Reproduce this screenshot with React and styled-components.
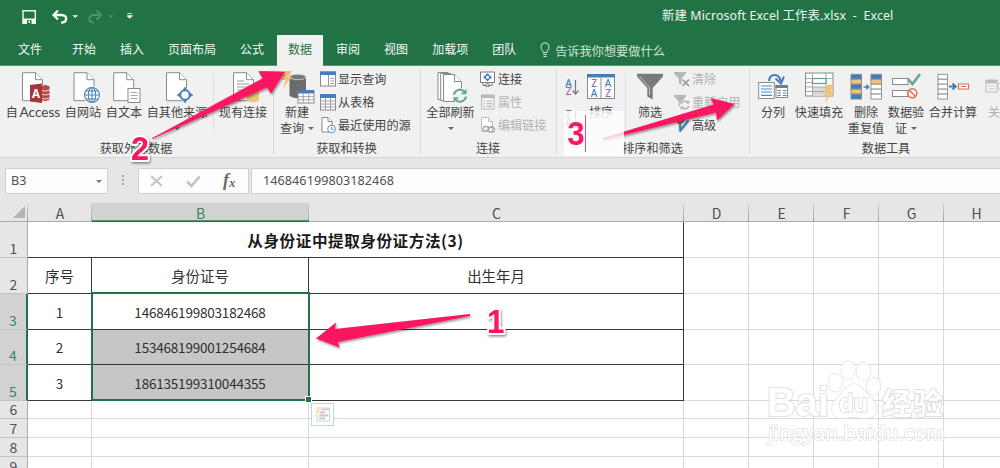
import React from "react";
import styled, { createGlobalStyle } from "styled-components";

const cjk = `"Noto Sans CJK SC", "Noto Sans", sans-serif`;
const latin = `"Noto Sans", "Noto Sans CJK SC", sans-serif`;

const Global = createGlobalStyle`
  * { box-sizing: border-box; }
  body { margin: 0; background: #fff; font-family: ${cjk}; overflow: hidden; }
  svg { display: block; overflow: visible; flex: none; }
`;

const Window = styled.div`
  position: relative;
  width: 1000px;
  height: 468px;
  overflow: hidden;
  display: flex;
  flex-direction: column;
  background: #fff;
`;

const TitleBar = styled.header`
  height: 35px;
  flex: none;
  background: #217346;
  display: flex;
  align-items: flex-start;
`;

const QuickAccess = styled.div`
  width: 662px;
  height: 35px;
  padding-left: 22px;
`;

const WindowTitle = styled.div`
  padding-top: 6px;
  font: 12.4px/20px ${latin};
  letter-spacing: ${(p) => p.$track || 0}px;
  color: #eef6f1;
  white-space: pre;
`;

const TabBar = styled.nav`
  height: 31px;
  flex: none;
  background: #217346;
  border-bottom: 1px solid #4f9a72;
  display: flex;
  padding-left: 6px;
`;

const Tab = styled.div`
  height: ${(p) => (p.$active ? 31 : 30)}px;
  padding: 0 ${(p) => (p.$active ? 11 : 12)}px;
  margin: 0 ${(p) => (p.$active ? 1 : 0)}px;
  margin-right: ${(p) => p.$gap || (p.$active ? 1 : 0)}px;
  font-size: 12px;
  line-height: 28px;
  white-space: nowrap;
  color: ${(p) => (p.$active ? "#217346" : "#f4faf6")};
  background: ${(p) => (p.$active ? "#f1f1f1" : "transparent")};
`;

const TellMe = styled.div`
  display: flex;
  gap: 5px;
  margin-left: 12px;
  padding-top: 7px;
  font-size: 12.2px;
  line-height: 18px;
  color: #cfe3d7;
`;

const Ribbon = styled.div`
  height: 91px;
  flex: none;
  display: flex;
  background: #f1f1f1;
`;

const Group = styled.section`
  width: ${(p) => p.$w}px;
  flex: none;
  display: flex;
  flex-direction: column;
  position: relative;
  background: linear-gradient(#d9d9d9, #d9d9d9) right 3px / 1px 85px no-repeat;
  background-position: right 0 top 3px;
`;

const GroupBody = styled.div`
  height: 72px;
  display: flex;
  padding-left: ${(p) => p.$pad || 0}px;
`;

const GroupName = styled.div`
  width: 100%;
  text-align: center;
  font-size: 12.1px;
  line-height: 19px;
  color: #444;
  margin-left: -1px;
`;

const BigButton = styled.div`
  width: ${(p) => p.$w}px;
  flex: none;
  display: flex;
  flex-direction: column;
  align-items: center;
  padding-top: 6px;
`;

const Label = styled.span`
  font-size: 12.1px;
  line-height: 16px;
  height: 16px;
  white-space: nowrap;
  color: ${(p) => (p.$off ? "#b1b1b1" : "#444")};
  display: flex;
  align-items: center;
  gap: 4px;
`;

const Latin = styled.span`
  font: 13.6px/16px Lato, ${latin};
  margin-left: -1px;
`;

const Caret = styled.i`
  width: 0;
  height: 0;
  margin-top: ${(p) => p.$drop || 0}px;
  border: 3px solid transparent;
  border-top: 3px solid ${(p) => p.$color || "#666"};
  border-bottom: 0;
`;

const Divider = styled.div`
  width: 1px;
  height: 58px;
  margin: 7px ${(p) => p.$r || 0}px 0 ${(p) => p.$l || 0}px;
  background: #dedede;
`;

const SmallList = styled.div`
  display: flex;
  flex-direction: column;
  padding-top: 2px;
  margin-left: ${(p) => p.$l || 0}px;
`;

const SmallButton = styled.div`
  height: 22.8px;
  display: flex;
  align-items: center;
  gap: 2px;
`;

const OrderButtons = styled.div`
  width: 16px;
  padding-top: 11px;
  display: flex;
  flex-direction: column;
  gap: 13px;
`;

const FormulaBar = styled.div`
  height: 46px;
  flex: none;
  background: #e6e6e6;
  border-top: 1px solid #d5d5d5;
  display: flex;
  padding: 10px 0 0 5px;
`;

const Field = styled.div`
  width: ${(p) => p.$w}px;
  height: 26px;
  flex: none;
  display: flex;
  align-items: center;
  justify-content: space-between;
  padding: 0 ${(p) => p.$pr || 0}px 0 ${(p) => p.$pl || 0}px;
  margin-right: ${(p) => p.$mr || 0}px;
  background: #fdfdfd;
  border: 1px solid #d0d0d0;
  font: 12.6px/24px ${latin};
  letter-spacing: ${(p) => p.$track || 0}px;
  color: #505050;
`;

const Dots = styled.div`
  width: 30px;
  flex: none;
  display: flex;
  flex-direction: column;
  align-items: center;
  gap: 2px;
  padding-top: 7px;
  &::before, &::after, & > i { content: ""; width: 2px; height: 2px; background: #a6a6a6; }
`;

const Sheet = styled.div`
  position: relative;
  display: grid;
  flex: none;
  grid-template-columns: 28px 64px 217px 375px repeat(5, 65px);
  grid-template-rows: 19px 36px 36px 36px 35px 36px 18px 19px 19px 19px;
  font-size: 14px;
`;

const ColumnHead = styled.div`
  display: flex;
  justify-content: center;
  align-items: center;
  padding-top: 2px;
  font: 14px/16px ${cjk};
  color: ${(p) => (p.$on ? "#3d8460" : "#505050")};
  background: linear-gradient(#d6d6d6, #9e9e9e) right / 1px 100% no-repeat,
    ${(p) => (p.$on ? "#d2d2d2" : "#e6e6e6")};
  border-bottom: ${(p) => (p.$on ? "1px solid #217346" : "1px solid #ababab")};
  box-shadow: ${(p) => (p.$on ? "inset 0 -1px #5b9475" : "none")};
`;

const Corner = styled(ColumnHead)`
  justify-content: flex-end;
  padding: 0 3px 1px 0;
`;

const RowHead = styled.div`
  display: flex;
  justify-content: center;
  align-items: flex-end;
  font: 14px/17px ${cjk};
  color: ${(p) => (p.$on ? "#3d8460" : "#505050")};
  background: ${(p) => (p.$on ? "#d2d2d2" : "#e6e6e6")};
  border-right: ${(p) => (p.$on ? "2px solid #217346" : "1px solid #ababab")};
  border-bottom: 1px solid #c4c4c4;
`;

const Cell = styled.div`
  grid-column: ${(p) => p.$col || "auto"};
  display: flex;
  justify-content: center;
  align-items: center;
  font: ${(p) => (p.$bold ? "700 15.6px" : p.$digits ? "13.5px" : "14.4px")}/20px ${cjk};
  letter-spacing: ${(p) => p.$track || 0}px;
  color: ${(p) => (p.$bold ? "#1a1a1a" : "#303030")};
  background: ${(p) => (p.$filled ? "#c6c6c6" : "#fff")};
  border-right: 1px solid ${(p) => (p.$table ? "#383838" : "#dadada")};
  border-bottom: 1px solid ${(p) => (p.$table ? "#383838" : "#dadada")};
`;

const Selection = styled.div`
  grid-column: 3 / 4;
  grid-row: 4 / 7;
  position: absolute;
  inset: -2px -1px 0 -1px;
  border: 2px solid #217346;
  z-index: 1;
  &::after {
    content: "";
    position: absolute;
    right: -3px;
    bottom: -3px;
    width: 5px;
    height: 5px;
    background: #217346;
    outline: 1px solid #fff;
  }
`;

const QuickAnalysis = styled.div`
  position: absolute;
  left: 311px;
  top: 403px;
  width: 23px;
  height: 23px;
  padding: 2px;
  background: #fdfefd;
  border: 1px solid #c5d6cc;
`;

const Overlay = styled.svg`
  position: absolute;
  left: 0;
  top: 0;
  z-index: 3;
`;

const Icon = ({ w = 32, h = 32, children }) => (
  <svg width={w} height={h} viewBox={`0 0 ${w} ${h}`} fill="none">{children}</svg>
);

const Page = ({ x, y = 0.7, w = 20, h = 28, f = 7, c = "#8a8a8a" }) => (
  <g stroke={c} fill="#fff">
    <path d={`M${x} ${y}H${x + w - f}L${x + w} ${y + f}V${y + h}H${x}Z`} />
    <path d={`M${x + w - f} ${y}V${y + f}H${x + w}`} />
  </g>
);

const Bolt = ({ x, y, s = 1 }) => (
  <path transform={`translate(${x} ${y}) scale(${s})`} d="M4 0H11L7.5 6H11L1.5 17.5L4.5 9H0Z" fill="#eec47c" />
);

const AccessIcon = () => (
  <Icon>
    <Page x={5.5} />
    <g fill="#b8474a" stroke="#fff" strokeWidth=".8">
      <path d="M23 14Q28.500 11 33 14V28Q28.500 31 23 28Z" />
      <path d="M23 18.500Q28.500 20 33 18M23 22Q28.500 24 33 22M23 26Q28.500 28 33 26" fill="none" />
    </g>
    <path d="M13 13L25 11.500V31L13 29.500Z" fill="#a4373a" />
    <text x="19" y="25.500" textAnchor="middle" fontFamily="Noto Sans" fontWeight="700" fontSize="11.500" fill="#fff">A</text>
  </Icon>
);

const WebIcon = () => (
  <Icon>
    <Page x={7} />
    <circle cx="25" cy="23" r="8" fill="#fff" stroke="#fff" strokeWidth="2" />
    <g stroke="#4b84b8" strokeWidth="1.100">
      <circle cx="25" cy="23" r="7.500" />
      <ellipse cx="25" cy="23" rx="3.700" ry="7.500" />
      <path d="M25 15.500V30.500M17.500 23H32.500M18.700 19H31.300M18.700 27H31.300" />
    </g>
  </Icon>
);

const TextIcon = () => (
  <Icon>
    <Page x={5.7} />
    <rect x="20" y="16.500" width="12" height="14" fill="#fff" stroke="#8a8a8a" />
    <path d="M22.500 20.500H29.500M22.500 23.500H29.500M22.500 26.500H29.500" stroke="#a8a8a8" />
  </Icon>
);

const SourceIcon = () => (
  <Icon>
    <Page x={5.5} />
    <path d="M24 14.500L27.500 18.500L31.800 23L27.500 27.500L24 31.500L20.500 27.500L16.200 23L20.500 18.500Z" fill="#f1f1f1" />
    <circle cx="24" cy="23" r="4.700" fill="#fff" stroke="#3f7fbd" strokeWidth="2" />
    <path d="M24 15L26 18.500H22ZM24 31L26 27.500H22ZM16 23L19.500 21V25ZM32 23L28.500 21V25Z" fill="#3f7fbd" stroke="#3f7fbd" strokeWidth=".6" />
  </Icon>
);

const ConnectionIcon = () => (
  <Icon>
    <Page x={6.5} />
    <path d="M10 9H17M10 12H22M10 15H22M10 18H22M10 21H18" stroke="#9c9c9c" />
    <path d="M20 14Q26 11 32 14V28.500Q26 31.500 20 28.500Z" fill="#eec47c" />
    <path d="M20 14Q26 17 32 14" stroke="#fff3dc" />
  </Icon>
);

const QueryIcon = () => (
  <Icon>
    <path d="M8.500 5V24Q16.500 28.500 25 24V5Z" fill="#6b6b6b" />
    <ellipse cx="16.700" cy="5" rx="8.200" ry="2.700" fill="#777" stroke="#ddd" strokeWidth=".8" />
    <rect x="17" y="18.500" width="16" height="12.500" fill="#fff" stroke="#8a8a8a" />
    <path d="M17 18H33V21.500H17Z" fill="#3f7fbd" />
    <path d="M22.300 21.500V31M27.700 21.500V31M17 24.700H33M17 27.800H33" stroke="#9c9c9c" strokeWidth=".9" />
    <Bolt x={0} y={-1} />
  </Icon>
);

const Refresh = ({ x, y, r = 6, c = "#69a68a", w = 2 }) => (
  <g transform={`translate(${x} ${y})`} stroke={c} strokeWidth={w}>
    <path d={`M${-r} -1A${r} ${r} 0 0 1 ${r * 0.75} ${-r * 0.65}M${r} 1A${r} ${r} 0 0 1 ${-r * 0.75} ${r * 0.65}`} />
    <path d={`M${r + 0.5} ${-r - 1}V-1.500H${r * 0.15}ZM${-r - 0.5} ${r + 1}V1.500H${-r * 0.15}Z`} fill={c} stroke="none" />
  </g>
);

const RefreshAllIcon = () => (
  <Icon>
    <Page x={3} y={0.5} w={15} h={27} f={5} />
    <Page x={5.7} y={1.5} w={16} h={27} f={6} />
    <Page x={8.5} y={2.5} w={18} h={27} f={7} />
    <circle cx="25" cy="23.700" r="8" fill="#f1f1f1" />
    <Refresh x={25} y={23.7} />
  </Icon>
);

const Letter = ({ x, y, c, t, s = 10 }) => (
  <text x={x} y={y} textAnchor="middle" fontFamily="Noto Sans" fontSize={s} fontWeight="500" fill={c}>{t}</text>
);

const SortIcon = () => (
  <Icon>
    <rect x="2.500" y="2.500" width="27" height="24" fill="#fff" stroke="#8a8a8a" />
    <path d="M2 2H30V5.500H2Z" fill="#3f7fbd" />
    <path d="M16 6V26" stroke="#8a8a8a" />
    <Letter x={9} y={15} c="#9464ad" t="Z" /><Letter x={9} y={24.7} c="#3f7fbd" t="A" />
    <Letter x={23} y={15} c="#3f7fbd" t="A" /><Letter x={23} y={24.7} c="#9464ad" t="Z" />
  </Icon>
);

const OrderIcon = ({ top, bottom, tc, bc }) => (
  <Icon w={16} h={18}>
    <Letter x={4.5} y={9.5} c={tc} t={top} /><Letter x={4.5} y={18} c={bc} t={bottom} />
    <path d="M11.500 3V16.500M8.500 13.500L11.500 17L14.500 13.500" stroke="#777" strokeWidth="1.200" />
  </Icon>
);

const FilterIcon = () => (
  <Icon>
    <path d="M3 1.700H29V4.500L18.700 16V27.500L13.300 24.500V16L3 4.500Z" fill="#7a7a7a" />
    <path d="M5.500 4.300L15.500 15.500V23" stroke="#c4c4c4" />
  </Icon>
);

const SplitIcon = () => (
  <Icon>
    <rect x="1.700" y="10.500" width="15.500" height="16" fill="#fff" stroke="#8a8a8a" />
    <path d="M4 14H15M4 17H15M4 20H15M4 23.300H15" stroke="#4d88c0" strokeWidth="1.200" />
    <rect x="19" y="13.500" width="11.500" height="12" fill="#fff" stroke="#8a8a8a" />
    <path d="M18.500 13H31V16H18.500Z" fill="#7a7a7a" />
    <path d="M20.500 18.500H24M26 18.500H29.500M20.500 21H24M26 21H29.500M20.500 23.500H24M26 23.500H29.500" stroke="#4d88c0" />
    <path d="M12 9C13 1 22 1 23.500 9" stroke="#3f7fbd" strokeWidth="2.200" />
    <path d="M18.500 6.500L24 11.500L27 4.500" stroke="#3f7fbd" strokeWidth="2" />
  </Icon>
);

const FlashFillIcon = () => (
  <Icon>
    <rect x="2.500" y="1" width="27.500" height="23" fill="#fff" stroke="#8a8a8a" />
    <path d="M9.500 15H22V24H9.500Z" fill="#dadada" />
    <path d="M9.500 1V24M23 1V24M2.500 6.500H30M2.500 15H30M2.500 19.500H30M2.500 10.500H9" stroke="#a2a2a2" strokeWidth=".9" />
    <rect x="9.500" y="6.500" width="13.500" height="5" fill="#fff" stroke="#5aa384" strokeWidth="1.200" />
    <Bolt x={20} y={12.5} s={1.05} />
  </Icon>
);

const Stack = ({ x, w = 10.5, fills }) => (
  <g stroke="#8a8a8a" strokeWidth=".9">
    {fills.map((f, i) => (
      <rect key={i} x={x} y={2.3 + i * 4.95} width={w} height="4.950" fill={f} />
    ))}
  </g>
);

const B = "#3f7fbd", Y = "#eec47c", W = "#fff";

const DedupeIcon = () => (
  <Icon>
    <Stack x={1} fills={[B, Y, B, Y, B]} />
    <Stack x={21} fills={[B, Y, W, W, W]} />
    <path d="M13.500 15H18.500M16.300 12.700L18.800 15L16.300 17.300" stroke={B} strokeWidth="1.300" />
  </Icon>
);

const ValidateIcon = () => (
  <Icon>
    <rect x="2.500" y="6.500" width="15.500" height="6" fill="#fff" stroke="#8a8a8a" />
    <rect x="2.500" y="18.500" width="15.500" height="6" fill="#fff" stroke="#8a8a8a" />
    <path d="M18 7L22.500 12L30 2" stroke="#69a68a" strokeWidth="2.600" />
    <circle cx="22.300" cy="21.300" r="4.500" fill="#fff" stroke="#dd6b50" strokeWidth="1.500" />
    <path d="M19.300 18.300L25.300 24.300" stroke="#dd6b50" strokeWidth="1.500" />
  </Icon>
);

const ConsolidateIcon = () => (
  <Icon>
    <Stack x={1} w={9.5} fills={[W, W, W, W, W]} />
    <path d="M12 14.500H18.500M15.500 11.500L18.800 14.500L15.500 17.500" stroke={B} strokeWidth="1.800" />
    <path d="M21.500 12H31.500V17H21.500ZM24 14.500H29" fill="#fff" stroke="#dd6b50" strokeWidth="1.100" />
  </Icon>
);

const RelationIcon = () => (
  <Icon>
    <rect x="2" y="8.500" width="11" height="11.500" fill="#f6f6f6" stroke="#bcbcbc" />
    <path d="M2 8H13V11H2Z" fill="#bcbcbc" stroke="#bcbcbc" />
    <path d="M18 8L13 14L18 20" stroke="#bcbcbc" />
    <path d="M4 14H11M4 17H11" stroke="#c8c8c8" />
  </Icon>
);

const S = ({ children }) => <Icon w={16} h={16}>{children}</Icon>;

const ShowQueryIcon = () => (
  <S>
    <rect x=".5" y="1" width="15" height="14" fill="#fff" stroke="#8a8a8a" />
    <path d="M0 .5H16V4H0Z" fill={B} />
    <path d="M8.500 4V15M10.500 7.500H14M10.500 10H14M10.500 12.500H14" stroke="#9a9a9a" />
  </S>
);
const TableIcon = () => (
  <S>
    <rect x=".5" y="1" width="15" height="15" fill="#fff" stroke="#8a8a8a" />
    <path d="M0 0H16V4H0Z" fill={B} />
    <path d="M5.500 4V16M10.500 4V16M0 7H16M0 10H16M0 13H16" stroke="#9a9a9a" strokeWidth=".9" />
  </S>
);
const RecentIcon = () => (
  <S>
    <Page x={2} y={0.5} w={10} h={14.5} f={4} />
    <circle cx="11.500" cy="12" r="3.800" fill="#fff" stroke="#5b8fc2" />
    <path d="M11.500 9.800V12.300H13.500" stroke="#5b8fc2" />
  </S>
);
const LinkIcon = () => (
  <S>
    <path d="M.5 1H14.500V11.500H.5Z" fill="#fff" stroke="#7a7a7a" />
    <path d="M3 11.500V14.500H6M12 11.500V14.500H9M6 13H9V15.500H6Z" stroke="#7a7a7a" fill="#fff" />
    <path d="M7.500 2L9.500 4.300L12 6.300L9.500 8.300L7.500 10.500L5.500 8.300L3 6.300L5.500 4.300Z" fill={B} />
    <circle cx="7.500" cy="6.300" r="1.500" fill="#fff" />
  </S>
);
const PropsIcon = () => (
  <S>
    <rect x="1.500" y="1" width="12.500" height="14" fill="#f6f3f6" stroke="#b9b5b9" />
    <path d="M1 1H14.500V4H1Z" fill="#b9b5b9" />
    <path d="M3.500 7H5M6.500 7H12M3.500 9.700H5M6.500 9.700H12M3.500 12.400H5M6.500 12.400H12" stroke="#b9b5b9" strokeWidth="1.200" />
  </S>
);
const EditLinkIcon = () => (
  <S>
    <Page x={1.5} y={0.5} w={11} h={14} f={4} c="#c0bbc0" />
    <path d="M4.500 9.500H8M10 9.500H13.500" stroke="#aaa" />
    <rect x="3" y="9.500" width="6" height="4.500" rx="2.200" stroke="#aaa" strokeWidth="1.300" fill="#f1f1f1" />
    <rect x="8" y="10.500" width="6.500" height="4.500" rx="2.200" stroke="#aaa" strokeWidth="1.300" />
  </S>
);
const Funnel = ({ c = "#b6b6b6" }) => <path d="M0 1H12V2.500L7.500 7.500V13.500L4.800 12V7.500L0 2.500Z" fill={c} />;
const ClearIcon = () => (
  <S><Funnel /><path d="M8.500 8.500L15 15M15 8.500L8.500 15" stroke="#9a9a9a" strokeWidth="1.700" /></S>
);
const ReapplyIcon = () => (
  <S><Funnel /><circle cx="11" cy="11" r="5" fill="#f1f1f1" /><Refresh x={11} y={11} r={3.8} c="#b0b0b0" w={1.5} /></S>
);
const AdvancedIcon = () => (
  <S><Funnel c="#7a7a7a" /><path d="M14.500 3.500L5.500 14.500" stroke={B} strokeWidth="2.600" /></S>
);

const Big = ({ w, icon, lines, off, caret }) => (
  <BigButton $w={w}>
    {icon}
    {lines.map((l, i) => (
      <Label key={i} $off={off}>
        {l}
        {caret === "inline" && i === lines.length - 1 && <Caret />}
      </Label>
    ))}
    {caret === "below" && <Caret $drop={7} />}
  </BigButton>
);

const Small = ({ icon, text, off }) => (
  <SmallButton>{icon}<Label $off={off}>{text}</Label></SmallButton>
);

const tabs = ["文件", "开始", "插入", "页面布局", "公式", "数据", "审阅", "视图", "加载项", "团队"];
const rows = [["1", "146846199803182468"], ["2", "153468199001254684"], ["3", "186135199310044355"]];
const spare = [0, 1, 2, 3, 4];

export default function App() {
  return (
    <Window>
      <Global />
      <TitleBar>
        <QuickAccess>
          <svg width="120" height="35" fill="none">
            <path d="M1 10.700H13.300V23.300H1Z" stroke="#f4faf6" strokeWidth="1.400" />
            <path d="M1 18.500H13.300V23.300H1Z" fill="#f4faf6" />
            <path d="M5 20H9.500V24H5Z" fill="#217346" /><path d="M6.500 20.500H8V23H6.500Z" fill="#f4faf6" />
            <path d="M32 15H39.500C46 15 45.500 22.700 39 22.700M36 10.500L31.500 15L36 19.500" stroke="#f4faf6" strokeWidth="2.300" />
            <path d="M50.500 15.300H56L53.200 18Z" fill="#f4faf6" />
            <path d="M78 15H72C65.500 15 66 22.500 72 22.500M74.500 10.500L79 15L74.500 19.500" stroke="#4f9270" strokeWidth="1.900" />
            <path d="M86.500 15.300H91.500L89 18Z" fill="#4f9270" />
            <path d="M105.500 13.500H110M105 15.700H110.500L107.700 18.300Z" stroke="#f4faf6" strokeWidth=".8" fill="#f4faf6" />
          </svg>
        </QuickAccess>
        <WindowTitle $track={0.1}>新建 Microsoft Excel 工作表.xlsx  -  Excel</WindowTitle>
      </TitleBar>
      <TabBar>
        {tabs.map((t, i) => (
          <Tab key={t} $active={t === "数据"} $gap={i === 0 ? 6 : 0}>{t}</Tab>
        ))}
        <TellMe>
          <svg width="10" height="15" fill="none" stroke="#cfe3d7">
            <path d="M3 10.500C3 8.500 1 7.500 1 4.800A4 4 0 0 1 9 4.800C9 7.500 7 8.500 7 10.500ZM3 12.500H7M3.500 14.500H6.500" />
          </svg>
          告诉我你想要做什么
        </TellMe>
      </TabBar>

      <Ribbon>
        <Group $w={274}>
          <GroupBody $pad={3}>
            <Big w={60} icon={<AccessIcon />} lines={[<span key="a">自 <Latin>Access</Latin></span>]} />
            <Big w={40} icon={<WebIcon />} lines={["自网站"]} />
            <Big w={42} icon={<TextIcon />} lines={["自文本"]} />
            <Big w={64} icon={<SourceIcon />} lines={["自其他来源"]} caret="below" />
            <Divider $l={4} />
            <Big w={58} icon={<ConnectionIcon />} lines={["现有连接"]} />
          </GroupBody>
          <GroupName>获取外部数据</GroupName>
        </Group>
        <Group $w={147}>
          <GroupBody $pad={1}>
            <Big w={44} icon={<QueryIcon />} lines={["新建", "查询"]} caret="inline" />
            <SmallList $l={1}>
              <Small icon={<ShowQueryIcon />} text="显示查询" />
              <Small icon={<TableIcon />} text="从表格" />
              <Small icon={<RecentIcon />} text="最近使用的源" />
            </SmallList>
          </GroupBody>
          <GroupName>获取和转换</GroupName>
        </Group>
        <Group $w={136}>
          <GroupBody $pad={1}>
            <Big w={57} icon={<RefreshAllIcon />} lines={["全部刷新"]} caret="below" />
            <SmallList $l={1}>
              <Small icon={<LinkIcon />} text="连接" />
              <Small icon={<PropsIcon />} text="属性" off />
              <Small icon={<EditLinkIcon />} text="编辑链接" off />
            </SmallList>
          </GroupBody>
          <GroupName>连接</GroupName>
        </Group>
        <Group $w={193}>
          <GroupBody $pad={7}>
            <OrderButtons>
              <OrderIcon top="A" bottom="Z" tc={B} bc="#9464ad" />
              <OrderIcon top="Z" bottom="A" tc="#9464ad" bc={B} />
            </OrderButtons>
            <Big w={42} icon={<SortIcon />} lines={["排序"]} />
            <Divider $l={3} />
            <Big w={48} icon={<FilterIcon />} lines={["筛选"]} />
            <SmallList>
              <Small icon={<ClearIcon />} text="清除" off />
              <Small icon={<ReapplyIcon />} text="重新应用" off />
              <Small icon={<AdvancedIcon />} text="高级" />
            </SmallList>
          </GroupBody>
          <GroupName>排序和筛选</GroupName>
        </Group>
        <Group $w={274}>
          <GroupBody>
            <Big w={46} icon={<SplitIcon />} lines={["分列"]} />
            <Big w={46} icon={<FlashFillIcon />} lines={["快速填充"]} />
            <Big w={48} icon={<DedupeIcon />} lines={["删除", "重复值"]} />
            <Big w={32} icon={<ValidateIcon />} lines={["数据验", "证"]} caret="inline" />
            <Big w={62} icon={<ConsolidateIcon />} lines={["合并计算"]} />
            <Big w={32} icon={<RelationIcon />} lines={["关系"]} off />
          </GroupBody>
          <GroupName>数据工具</GroupName>
        </Group>
      </Ribbon>

      <FormulaBar>
        <Field $w={103} $pl={5} $pr={5}>B3<Caret $color="#777" /></Field>
        <Dots><i /></Dots>
        <Field $w={111} $pl={11} $pr={12} $mr={2}>
          <svg width="86" height="20" fill="none">
            <path d="M1 5L12 15M12 5L1 15" stroke="#c4c4c4" strokeWidth="1.800" />
            <path d="M37 10.500L41.500 15L49.500 5.500" stroke="#c4c4c4" strokeWidth="2.600" />
            <text x="73" y="14.500" fontFamily="Liberation Serif" fontStyle="italic" fontWeight="700" fontSize="18" fill="#6a6a6a">f</text>
            <text x="79" y="15.500" fontFamily="Liberation Serif" fontStyle="italic" fontWeight="700" fontSize="13" fill="#6a6a6a">x</text>
          </svg>
        </Field>
        <Field $w={760} $pl={11} $track={0.07}>146846199803182468</Field>
      </FormulaBar>

      <Sheet>
        <Corner><svg width="12" height="12"><path d="M12 0V12H0Z" fill="#b4b4b4" /></svg></Corner>
        {["A", "B", "C", "D", "E", "F", "G", "H"].map((c) => (
          <ColumnHead key={c} $on={c === "B"}>{c}</ColumnHead>
        ))}

        <RowHead>1</RowHead>
        <Cell $col="2 / 5" $table $bold $track={0.55}>从身份证中提取身份证方法(3)</Cell>
        {spare.map((i) => <Cell key={i} />)}

        <RowHead>2</RowHead>
        <Cell $table>序号</Cell>
        <Cell $table>身份证号</Cell>
        <Cell $table>出生年月</Cell>
        {spare.map((i) => <Cell key={i} />)}

        {rows.map(([n, id], r) => (
          <React.Fragment key={n}>
            <RowHead $on>{r + 3}</RowHead>
            <Cell $table $digits>{n}</Cell>
            <Cell $table $digits $filled={r > 0} $track={-0.2}>{id}</Cell>
            <Cell $table />
            {spare.map((i) => <Cell key={i} />)}
          </React.Fragment>
        ))}

        {[6, 7, 8, 9].map((n) => (
          <React.Fragment key={n}>
            <RowHead>{n}</RowHead>
            {[0, 1, 2, ...spare.map((i) => i + 3)].map((i) => <Cell key={i} />)}
          </React.Fragment>
        ))}
        <Selection />
      </Sheet>

      <QuickAnalysis>
        <svg width="17" height="17" fill="none">
          <path d="M5 2H15.500V15H3V9" stroke="#d2d2d2" />
          <path d="M3 1L7 1L5 5H7L1 11L3 6H1Z" fill="#f6e2bd" />
          <path d="M7 3.500H15" stroke="#c9c9c9" strokeWidth="1.500" />
          <path d="M6 6.500H11" stroke="#efbcb2" strokeWidth="2" />
          <path d="M5 9.500H14" stroke="#b4cbe6" strokeWidth="2" />
          <path d="M5 12.500H11" stroke="#b5d4c3" strokeWidth="2" />
        </svg>
      </QuickAnalysis>

      <Overlay width="1000" height="468" fill="none">
        <defs>
          <filter id="soft" x="-10%" y="-10%" width="130%" height="140%">
            <feDropShadow dx="1" dy="1.500" stdDeviation="1" floodColor="#000" floodOpacity=".45" />
          </filter>
        </defs>
        <g opacity=".85" stroke="#dcdcdc" fill="#fff" strokeWidth="1.500" paintOrder="stroke" fontWeight="700" strokeLinejoin="round">
          <ellipse cx="835.300" cy="382.700" rx="7" ry="9" />
          <ellipse cx="848" cy="370" rx="6.800" ry="9" />
          <ellipse cx="863.500" cy="371.300" rx="7" ry="9" />
          <ellipse cx="873.500" cy="386.500" rx="7" ry="8.800" />
          <path d="M854 384C861 384 864 391 869 396C878 403 880 417 868 418C862 418.500 859 417 854 417C849 417 846 418.500 840 418C829 417 830 403 839 396C844 391 847 384 854 384Z" />
          <text x="767" y="416" fontFamily="Liberation Sans" fontSize="40" textLength="62" lengthAdjust="spacingAndGlyphs" strokeWidth="2.200">Bai</text>
          <text x="839" y="411.500" fontFamily="Liberation Sans" fontSize="25" textLength="29" lengthAdjust="spacingAndGlyphs" strokeWidth="2">du</text>
          <text x="882" y="413.500" fontFamily="Noto Sans CJK SC" fontSize="30" textLength="61" strokeWidth="2.200">经验</text>
          <text x="768" y="440" fontFamily="Open Sans" fontWeight="600" fontSize="20" textLength="177" lengthAdjust="spacingAndGlyphs" strokeWidth="1.600">jingyan.baidu.com</text>
        </g>
        <g fill="#fc155f" filter="url(#soft)">
          <path d="M152.300 138.500L263 78.500L259 71.500L284.500 72L271 93L267 87Z" stroke="#fc155f" strokeWidth=".8" />
          <path d="M470 314L335 329L336 322.500L316 338.500L339.500 347.500L337.500 342L470 316Z" />
          <path d="M603 138L713.500 104.500L710.700 98L734.500 104L717 120.500L716 112.500L603 140Z" />
        </g>
        <rect x="564" y="111" width="60" height="45" fill="#fff" fillOpacity=".8" />
        <path d="M585.500 115V152" stroke="#e0557f" />
        <g fontFamily="Liberation Sans" fontWeight="700" fill="#fc155f">
          <text x="567.500" y="145" fontSize="34" textLength="17" lengthAdjust="spacingAndGlyphs">3</text>
          <g filter="url(#soft)" stroke="#fff" strokeWidth="4" strokeLinejoin="round" paintOrder="stroke">
            <text x="131" y="160" fontSize="34" textLength="18" lengthAdjust="spacingAndGlyphs">2</text>
            <text x="487" y="333" fontSize="34" textLength="17.500" lengthAdjust="spacingAndGlyphs">1</text>
          </g>
        </g>
      </Overlay>
    </Window>
  );
}
